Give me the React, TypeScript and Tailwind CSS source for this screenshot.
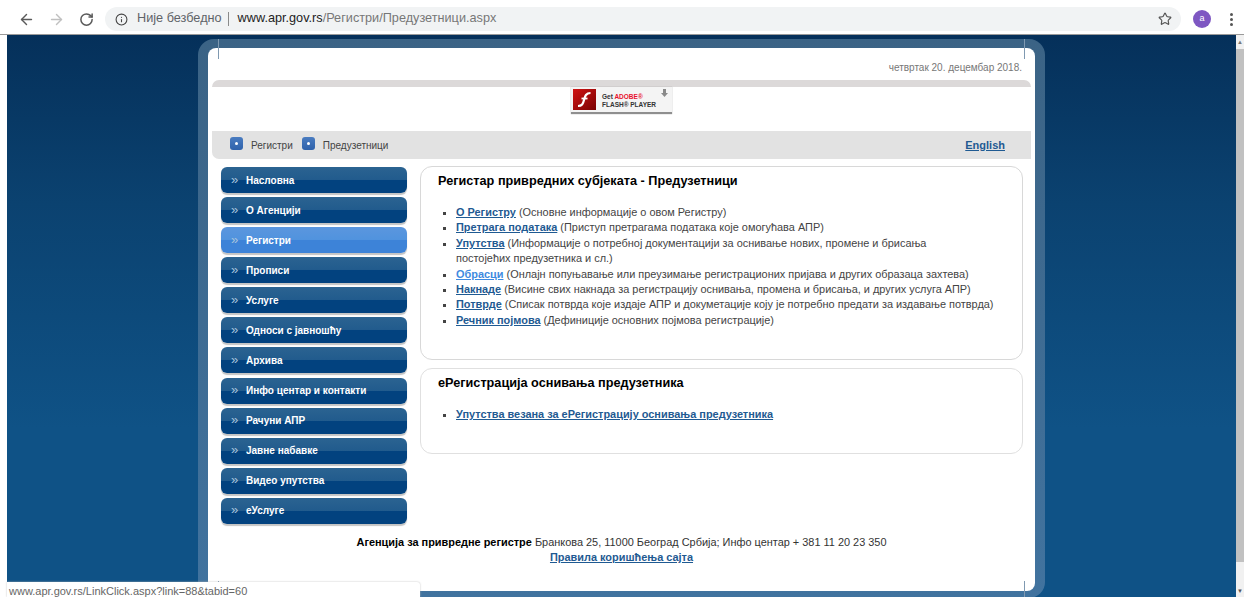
import React from 'react';
import { ArrowLeft, ArrowRight, RotateCw, Info, Star } from 'lucide-react';

const menuItems = [
  'Насловна',
  'О Агенцији',
  'Регистри',
  'Прописи',
  'Услуге',
  'Односи с јавношћу',
  'Архива',
  'Инфо центар и контакти',
  'Рачуни АПР',
  'Јавне набавке',
  'Видео упутства',
  'еУслуге',
];

const registerLinks = [
  { label: 'О Регистру', text: '(Основне информације о овом Регистру)' },
  { label: 'Претрага података', text: '(Приступ претрагама података које омогућава АПР)' },
  {
    label: 'Упутства',
    text: '(Информације о потребној документацији за оснивање нових, промене и брисања',
    more: 'постојећих предузетника и сл.)',
  },
  { label: 'Обрасци', text: '(Онлајн попуњавање или преузимање регистрационих пријава и других образаца захтева)', visited: true },
  { label: 'Накнаде', text: '(Висине свих накнада за регистрацију оснивања, промена и брисања, и других услуга АПР)' },
  { label: 'Потврде', text: '(Списак потврда које издаје АПР и докуметације коју је потребно предати за издавање потврда)' },
  { label: 'Речник појмова', text: '(Дефиниције основних појмова регистрације)' },
];

const Crumb = ({ label }: { label: string }) => (
  <>
    <span className="w-[13px] h-[13px] -mt-[3px] rounded-[3px] bg-[linear-gradient(#4a7cc0,#2f62ab)] flex items-center justify-center">
      <span className="w-[3px] h-[3px] rounded-full bg-white" />
    </span>
    <span className="ml-[8px] mr-[9px] text-[#444]">{label}</span>
  </>
);

const MenuButton = ({ label }: { label: string }) => {
  const active = label === 'Регистри';
  return (
    <div
      className={
        active
          ? 'h-[26px] rounded-[6px] flex items-center pl-[10px] text-[10px] font-bold text-white shadow-[0_2px_1px_#c4c4c4] bg-[linear-gradient(#5b96de_0%,#5093de_50%,#3d83d8_50%,#3d83d8_100%)]'
          : 'h-[26px] rounded-[6px] flex items-center pl-[10px] text-[10px] font-bold text-white shadow-[0_2px_1px_#c4c4c4] bg-[linear-gradient(#2b6391_0%,#215b8d_50%,#02427f_50%,#02427f_100%)]'
      }
    >
      <span className="w-[15px] text-[13px] font-normal leading-none text-[#a9c3dc] -mt-[2px]">»</span>
      {label}
    </div>
  );
};

export default function App() {
  return (
    <div className="relative h-[597px] overflow-hidden bg-white font-['Liberation_Sans',Arial,sans-serif]">
      {/* browser toolbar */}
      <div className="h-[35px] pt-[4px] flex items-center border-b border-[#9a9a9a] bg-white">
        <ArrowLeft size={17} strokeWidth={2} className="ml-[18px] text-[#5a5a5a]" />
        <ArrowRight size={17} strokeWidth={2} className="ml-[13px] text-[#c0c0c0]" />
        <RotateCw size={15} strokeWidth={2.4} className="ml-[14px] text-[#5a5a5a]" />
        <div className="ml-[11px] h-[24px] w-[1076px] rounded-full bg-[#f1f3f4] flex items-center pl-[10px] pr-[9px] text-[12.7px]">
          <Info size={13} className="text-[#444]" />
          <span className="ml-[9px] text-[#5f6368]">Није безбедно</span>
          <span className="ml-[6px] mr-[9px] h-[14px] w-px bg-[#8a8a8a]" />
          <span className="text-[#222]">www.apr.gov.rs</span>
          <span className="text-[#777]">/Регистри/Предузетници.aspx</span>
          <Star size={14} strokeWidth={2} className="ml-auto text-[#555]" />
        </div>
        <span className="ml-[12px] w-[18px] h-[18px] rounded-full bg-[#7e57c2] text-white text-[9px] flex items-center justify-center">
          a
        </span>
        <span className="ml-[19px] flex flex-col gap-[2px]">
          <span className="w-[3px] h-[3px] rounded-full bg-[#555]" />
          <span className="w-[3px] h-[3px] rounded-full bg-[#555]" />
          <span className="w-[3px] h-[3px] rounded-full bg-[#555]" />
        </span>
      </div>

      <div className="flex h-[562px] pl-[7px]">
        {/* page background */}
        <div className="flex-1 bg-[linear-gradient(#05305a_0%,#0b4270_30%,#0f5286_70%,#0f5286_100%)] pl-[191px] pt-[4px]">
          <div className="relative w-[847px] h-[559px] rounded-[16px] bg-[linear-gradient(#3b6385,#41739f)] px-[10px] pt-[9px]">
            {/* seams of the rounded frame */}
            <span className="absolute left-[20px] top-0 h-[20px] w-px bg-[#7f99b1]" />
            <span className="absolute right-[20px] top-0 h-[20px] w-px bg-[#7f99b1]" />
            <span className="absolute left-[20px] bottom-0 h-[17px] w-px bg-[#7f99b1]" />
            <span className="absolute right-[20px] bottom-0 h-[17px] w-px bg-[#7f99b1]" />

            <div className="h-[543px] rounded-[8px] bg-white px-[4px] pt-[14px]">
              <div className="h-[18px] text-right pr-[9px] text-[10px] leading-[11px] text-[#777]">
                четвртак 20. децембар 2018.
              </div>
              <div className="h-[7px] rounded-t-[7px] bg-[#dcd9d9]" />

              {/* flash badge */}
              <div className="h-[44px] flex justify-center">
                <div className="relative h-[27px] w-[101px] flex items-center bg-[#f4f4f4] border-b-2 border-[#8f8f8f] shadow-[0_0_1px_#999]">
                  <svg width="23" height="21" viewBox="0 0 23 21" className="ml-[2px]">
                    <defs>
                      <linearGradient id="flashRed" x1="0" y1="0" x2="1" y2="1">
                        <stop offset="0" stopColor="#d01515" />
                        <stop offset="1" stopColor="#7a0000" />
                      </linearGradient>
                    </defs>
                    <rect width="23" height="21" fill="url(#flashRed)" />
                    <path d="M17.500 4C13 4 12 7 11 11C10 15 9 17 5 17" fill="none" stroke="#fff" strokeWidth="2.200" />
                    <path d="M8.500 9.500H14.500" fill="none" stroke="#fff" strokeWidth="1.800" />
                  </svg>
                  <span className="ml-[6px] mt-[2px] text-[6.5px] font-bold leading-[8px] text-[#333]">
                    Get <span className="text-[#e8112d]">ADOBE®</span>
                    <br />
                    FLASH® PLAYER
                  </span>
                  <svg width="7" height="8" viewBox="0 0 7 8" className="absolute right-[4px] top-[2px]">
                    <path d="M2 0h3v4h2L3.500 8 0 4h2z" fill="#8a8a8a" />
                  </svg>
                </div>
              </div>

              {/* breadcrumb */}
              <div className="h-[28px] rounded-bl-[7px] bg-[#e2e2e2] flex items-center pl-[18px] pr-[26px] text-[10px]">
                <Crumb label="Регистри" />
                <Crumb label="Предузетници" />
                <a className="ml-auto text-[11px] font-bold underline text-[#1f5a92]">English</a>
              </div>

              <div className="flex pt-[8px]">
                <div className="w-[186px] ml-[9px] flex flex-col gap-[4.09px]">
                  {menuItems.map(item => (
                    <MenuButton key={item} label={item} />
                  ))}
                </div>

                <div className="w-[603px] ml-[13px] -mt-px">
                  <div className="h-[194px] rounded-[12px] border border-[#d8d8d8] pl-[16px] pr-[24px] pt-[7px]">
                    <h2 className="pl-px text-[12.7px] leading-[15px] font-bold text-black">
                      Регистар привредних субјеката - Предузетници
                    </h2>
                    <ul className="mt-[16px] pl-[19px] list-[square] text-[10.93px] leading-[15.4px] text-[#444]">
                      {registerLinks.map(link => (
                        <li key={link.label}>
                          <a className={link.visited ? 'font-bold underline text-[#3d8ae0]' : 'font-bold underline text-[#1f5a92]'}>
                            {link.label}
                          </a>{' '}
                          {link.text}
                          {link.more && (
                            <>
                              <br />
                              {link.more}
                            </>
                          )}
                        </li>
                      ))}
                    </ul>
                  </div>
                  <div className="mt-[8px] h-[86px] rounded-[12px] border border-[#e0e0e0] pl-[16px] pr-[24px] pt-[7px]">
                    <h2 className="pl-px text-[12.7px] leading-[15px] font-bold text-black">еРегистрација оснивања предузетника</h2>
                    <ul className="mt-[16px] pl-[19px] list-[square] text-[10.93px] leading-[15.4px] text-[#444]">
                      <li>
                        <a className="font-bold underline text-[#1f5a92]">Упутства везана за еРегистрацију оснивања предузетника</a>
                      </li>
                    </ul>
                  </div>
                </div>
              </div>

              <div className="mt-[11px] text-center text-[10.93px] leading-[15px] text-[#333]">
                <b className="text-black">Агенција за привредне регистре</b> Бранкова 25, 11000 Београд Србија; Инфо центар + 381 11 20 23 350
                <br />
                <a className="font-bold underline text-[#1f5a92]">Правила коришћења сајта</a>
              </div>
            </div>
          </div>
        </div>

        {/* scrollbar */}
        <div className="w-[8px] flex flex-col bg-[#f1f1f1]">
          <div className="h-[14px] flex items-center justify-center text-[6px] leading-none text-[#777]">▲</div>
          <div className="h-[513px] bg-[#c1c1c1]" />
          <div className="mt-auto h-[13px] flex items-center justify-center text-[6px] leading-none text-[#555]">▼</div>
        </div>
      </div>

      {/* link preview at the bottom of the window */}
      <div className="absolute left-[7px] bottom-0 w-[413px] h-[15px] bg-white rounded-tr-[3px] shadow-[0_0_2px_#bbb] pl-[2px] text-[11px] leading-[18px] text-[#666]">
        www.apr.gov.rs/LinkClick.aspx?link=88&amp;tabid=60
      </div>
    </div>
  );
}
